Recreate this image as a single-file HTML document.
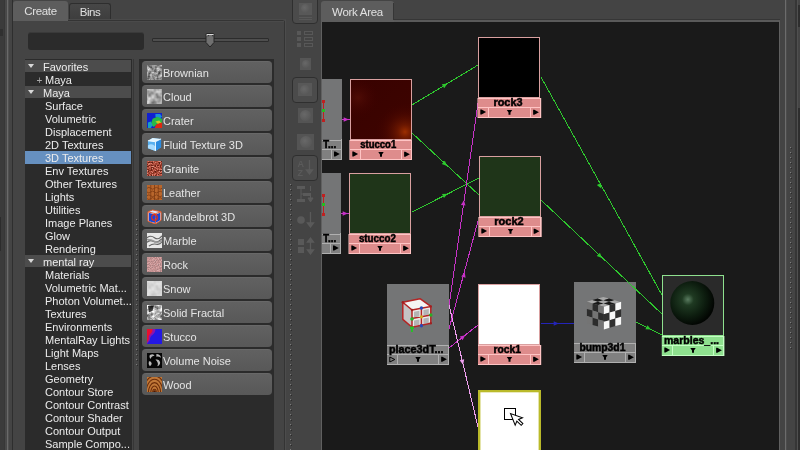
<!DOCTYPE html><html><head><meta charset="utf-8"><title>Hypershade</title><style>
html,body{margin:0;padding:0;background:#444;}
#root{will-change:transform;position:relative;width:800px;height:450px;overflow:hidden;background:#444;font-family:"Liberation Sans",sans-serif;font-size:11px;color:#ececec;}
#root div,#root span{position:absolute;box-sizing:border-box;white-space:nowrap;}
.tab{background:#5d5d5d;border-radius:3px 3px 0 0;color:#e0e0e0;text-align:center;}
#tree{left:25px;top:59px;width:107px;height:391px;background:#2b2b2b;}
#tree .row{left:0;width:107px;height:13px;line-height:13px;}
#tree .row{margin-top:-59px;}
#tree .hd{background:#4c4c4c;width:106px;height:12px;}
#tree .sel{background:#6690c0;width:106px;}
#tree .it{left:20px;top:1px;}
#tree .ht{left:18px;top:1px;}
#tree .pt{left:20px;top:1px;}
#tree .pl{left:11.5px;top:1px;color:#aaa;font-size:10px;}
#tree .tri{left:2.5px;top:4px;width:0;height:0;border-left:3.5px solid transparent;border-right:3.5px solid transparent;border-top:4.5px solid #d8d8d8;}
#list{left:139px;top:59px;width:135px;height:391px;background:#2b2b2b;}
#list .btn{left:3px;width:130px;height:22px;margin-top:-59px;background:linear-gradient(#616161,#585858);border-radius:4px;border-top:1px solid #686868;}
#list .ic{left:4.5px;top:2.5px;width:15px;height:15px;}
#list .bt{left:21px;top:1px;height:20px;line-height:21px;font-size:11px;color:#e4e4e4;}
.nl{font-family:"Liberation Sans",sans-serif;font-weight:bold;font-size:10px;fill:#000;stroke:#000;stroke-width:0.45px;}

</style></head><body>
<div id="root">
<div style="left:0;top:0;width:5px;height:450px;background:#3b3b3b"></div>
<div style="left:4px;top:0;width:1px;height:450px;background:#373737"></div>
<div style="left:5px;top:0;width:2px;height:450px;background:#484848"></div>
<div style="left:7px;top:0;width:1px;height:450px;background:#6a6a6a"></div>
<div style="left:8px;top:0;width:1px;height:450px;background:#505050"></div>
<div style="left:12px;top:0;width:1px;height:450px;background:#2e2e2e"></div>
<div style="left:0;top:217px;width:1px;height:34px;background:#2c2c2c"></div>
<div style="left:0;top:29px;width:3px;height:7px;background:#303030"></div>
<div class="tab" style="left:13px;top:1px;width:55px;height:20px;line-height:21px;font-size:11.5px;letter-spacing:-0.3px">Create</div>
<div class="tab" style="left:69px;top:3px;width:42px;height:17px;line-height:17px;font-size:11.5px;background:linear-gradient(#474747,#3d3d3d);border:1px solid #2e2e2e;border-bottom:none;border-radius:3px 3px 0 0;letter-spacing:-0.5px">Bins</div>
<div style="left:28px;top:32px;width:116px;height:18px;background:#2b2b2b;border-radius:3px;border-top:1px solid #3a3a3a"></div>
<div style="left:152px;top:38px;width:117px;height:4px;background:#4e4e4e;border:1px solid #2c2c2c;border-radius:1px"></div>
<svg style="position:absolute;left:203px;top:32px" width="15" height="17" viewBox="0 0 15 17"><path d="M3,2.500q0,-1 1,-1h6q1,0 1,1v8l-4,4.500l-4,-4.500z" fill="#707070" stroke="#262626" stroke-width="1"/><path d="M4,3.500v-1h6.500" fill="none" stroke="#dcdcdc" stroke-width="1"/><path d="M5,4.500v-1h1M9,3.500h1v1" fill="none" stroke="#3a3a3a" stroke-width="1"/></svg>

<div id="tree">
<div class="row hd" style="top:60px"><span class="tri"></span><span class="ht">Favorites</span></div>
<div class="row" style="top:73px"><span class="pl">+</span><span class="pt">Maya</span></div>
<div class="row hd" style="top:86px"><span class="tri"></span><span class="ht">Maya</span></div>
<div class="row" style="top:99px"><span class="it">Surface</span></div>
<div class="row" style="top:112px"><span class="it">Volumetric</span></div>
<div class="row" style="top:125px"><span class="it">Displacement</span></div>
<div class="row" style="top:138px"><span class="it">2D Textures</span></div>
<div class="row sel" style="top:151px"><span class="it">3D Textures</span></div>
<div class="row" style="top:164px"><span class="it">Env Textures</span></div>
<div class="row" style="top:177px"><span class="it">Other Textures</span></div>
<div class="row" style="top:190px"><span class="it">Lights</span></div>
<div class="row" style="top:203px"><span class="it">Utilities</span></div>
<div class="row" style="top:216px"><span class="it">Image Planes</span></div>
<div class="row" style="top:229px"><span class="it">Glow</span></div>
<div class="row" style="top:242px"><span class="it">Rendering</span></div>
<div class="row hd" style="top:255px"><span class="tri"></span><span class="ht">mental ray</span></div>
<div class="row" style="top:268px"><span class="it">Materials</span></div>
<div class="row" style="top:281px"><span class="it">Volumetric Mat...</span></div>
<div class="row" style="top:294px"><span class="it">Photon Volumet...</span></div>
<div class="row" style="top:307px"><span class="it">Textures</span></div>
<div class="row" style="top:320px"><span class="it">Environments</span></div>
<div class="row" style="top:333px"><span class="it">MentalRay Lights</span></div>
<div class="row" style="top:346px"><span class="it">Light Maps</span></div>
<div class="row" style="top:359px"><span class="it">Lenses</span></div>
<div class="row" style="top:372px"><span class="it">Geometry</span></div>
<div class="row" style="top:385px"><span class="it">Contour Store</span></div>
<div class="row" style="top:398px"><span class="it">Contour Contrast</span></div>
<div class="row" style="top:411px"><span class="it">Contour Shader</span></div>
<div class="row" style="top:424px"><span class="it">Contour Output</span></div>
<div class="row" style="top:437px"><span class="it">Sample Compo...</span></div>
</div>
<div id="list">
<div class="btn" style="top:61px"><span class="ic"><svg width="15" height="15" viewBox="0 0 16 16" style="position:absolute;left:0;top:0"><rect width="16" height="16" fill="#8c8c8c"/><rect width="16" height="16" filter="url(#nzB)" opacity="1"/></svg></span><span class="bt">Brownian</span></div>
<div class="btn" style="top:85px"><span class="ic"><svg width="15" height="15" viewBox="0 0 16 16" style="position:absolute;left:0;top:0"><rect width="16" height="16" fill="#a4a4a4"/><rect width="16" height="16" filter="url(#nzC)" opacity="0.9"/></svg></span><span class="bt">Cloud</span></div>
<div class="btn" style="top:109px"><span class="ic"><svg width="15" height="15" viewBox="0 0 16 16" style="position:absolute;left:0;top:0"><rect width="16" height="16" fill="#1020d0"/><path d="M9,1l5,0l2,3l-3,2l-4,-2z" fill="#1890d8"/><path d="M6,6l5,-2l5,2v5l-5,1l-4,3l-3,-3z" fill="#28b848"/><path d="M1,10l3,-1l2,4l-2,3h-3z" fill="#18a0c0"/><path d="M9,9l4,-1l2,2l-3,2z" fill="#c8c820"/><path d="M10,12l6,-2v6h-8z" fill="#e02810"/></svg></span><span class="bt">Crater</span></div>
<div class="btn" style="top:133px"><span class="ic"><svg width="15" height="15" viewBox="0 0 16 16" style="position:absolute;left:0;top:0"><path d="M1,4l5,-3l9,1l0,9l-6,4l-8,-3z" fill="#58b0f0"/><path d="M1,4l5,-3l9,1l-6,3z" fill="#e4f6ff"/><path d="M9,5l6,-3v9l-6,4z" fill="#2c8ce0"/><path d="M1,9q4,-3 8,1l0,5l-8,-3z" fill="#a8dcff"/><path d="M1,4l8,1l6,-3M9,5v10" stroke="#f4fbff" stroke-width="1" fill="none"/></svg></span><span class="bt">Fluid Texture 3D</span></div>
<div class="btn" style="top:157px"><span class="ic"><svg width="15" height="15" viewBox="0 0 16 16" style="position:absolute;left:0;top:0"><rect width="16" height="16" fill="#b04a34"/><rect width="16" height="16" filter="url(#nzG)" opacity="0.55"/></svg></span><span class="bt">Granite</span></div>
<div class="btn" style="top:181px"><span class="ic"><svg width="15" height="15" viewBox="0 0 16 16" style="position:absolute;left:0;top:0"><rect width="16" height="16" fill="#b8662c"/><path d="M0,3.500q2,-2 4,0t4,0t4,0t4,0M0,7.500q2,2 4,0t4,0t4,0t4,0M0,11.500q2,-2 4,0t4,0t4,0t4,0M0,14.500q2,2 4,0t4,0t4,0t4,0M4,0v16M8,0v16M12,0v16" stroke="#7a3810" stroke-width="1" fill="none" opacity="0.8"/></svg></span><span class="bt">Leather</span></div>
<div class="btn" style="top:205px"><span class="ic"><svg width="15" height="15" viewBox="0 0 16 16" style="position:absolute;left:0;top:0"><path d="M1,3l5,-2l9,2v9l-6,4l-8,-3z" fill="#d8e4f8"/><path d="M2,4l7,2l5,-2v8l-5,3l-7,-2z" fill="#1848d8"/><path d="M1,3l8,2l6,-2M9,5v11M1,3v10l8,3l6,-4v-9l-9,-2z" stroke="#e85828" stroke-width="1" fill="none"/><circle cx="8" cy="9" r="3" fill="none" stroke="#e03018" stroke-width="1.3"/><circle cx="7.500" cy="8.500" r="1.600" fill="#2040e0"/></svg></span><span class="bt">Mandelbrot 3D</span></div>
<div class="btn" style="top:229px"><span class="ic"><svg width="15" height="15" viewBox="0 0 16 16" style="position:absolute;left:0;top:0"><rect width="16" height="16" fill="#e8e8e8"/><path d="M0,5q4,-3 8,0t8,-2M0,10q3,-3 7,-1t9,-3M2,14q4,-3 8,-2t6,-3" stroke="#444" stroke-width="1.200" fill="none" opacity="0.8"/><path d="M0,7q5,0 8,2t8,-1" stroke="#9a9a9a" stroke-width="1.500" fill="none"/></svg></span><span class="bt">Marble</span></div>
<div class="btn" style="top:253px"><span class="ic"><svg width="15" height="15" viewBox="0 0 16 16" style="position:absolute;left:0;top:0"><rect width="16" height="16" fill="#cfa0a0"/><rect width="16" height="16" filter="url(#nzR)" opacity="0.18"/></svg></span><span class="bt">Rock</span></div>
<div class="btn" style="top:277px"><span class="ic"><svg width="15" height="15" viewBox="0 0 16 16" style="position:absolute;left:0;top:0"><rect width="16" height="16" fill="#e6e6e6"/><rect width="16" height="16" filter="url(#nzC)" opacity="0.25"/></svg></span><span class="bt">Snow</span></div>
<div class="btn" style="top:301px"><span class="ic"><svg width="15" height="15" viewBox="0 0 16 16" style="position:absolute;left:0;top:0"><rect width="16" height="16" fill="#9a9a9a"/><rect width="16" height="16" filter="url(#nzF)" opacity="1"/><path d="M1,1h6l-1,5l-4,2z" fill="#000" opacity="0.75" filter="url(#blur1)"/></svg></span><span class="bt">Solid Fractal</span></div>
<div class="btn" style="top:325px"><span class="ic"><svg width="15" height="15" viewBox="0 0 16 16" style="position:absolute;left:0;top:0"><rect width="16" height="16" fill="#2418e4"/><path d="M0,0h9q0,4 -3,6q-3,2 -3,6l-3,4z" fill="#8a14b0"/><path d="M0,0h6q0,3 -2,5q-3,2 -2,6l-2,3z" fill="#e81030"/></svg></span><span class="bt">Stucco</span></div>
<div class="btn" style="top:349px"><span class="ic"><svg width="15" height="15" viewBox="0 0 16 16" style="position:absolute;left:0;top:0"><rect width="16" height="16" fill="#060606"/><path d="M3,2q4,-2 5,1q-3,0 -4,3q-2,-1 -1,-4zM10,1q4,0 5,4q-3,-2 -5,-1zM9,7q4,-1 5,3q0,3 -3,4q2,-3 -2,-7zM2,9q2,-1 3,2q0,2 -2,3q-2,-2 -1,-5z" fill="#b8b8b8" filter="url(#blur1)"/></svg></span><span class="bt">Volume Noise</span></div>
<div class="btn" style="top:373px"><span class="ic"><svg width="15" height="15" viewBox="0 0 16 16" style="position:absolute;left:0;top:0"><rect width="16" height="16" fill="#c07838"/><g fill="none" stroke="#6c2c08" stroke-width="1.100"><ellipse cx="8" cy="17" rx="2" ry="4"/><ellipse cx="8" cy="17" rx="4" ry="7.500"/><ellipse cx="8" cy="17" rx="6.500" ry="11"/><ellipse cx="8" cy="17" rx="9" ry="14.500"/><ellipse cx="8" cy="17" rx="12" ry="18"/></g><ellipse cx="8" cy="17" rx="1.500" ry="3" fill="#4a1804"/></svg></span><span class="bt">Wood</span></div>
</div>
<div style="left:68px;top:20px;width:216px;height:1px;background:#343434;"></div>
<div style="left:284px;top:21px;width:1px;height:430px;background:#343434;"></div>
<div style="left:283px;top:20px;width:1px;height:1px;background:#3c3c3c;"></div>
<div style="left:68px;top:19px;width:218px;height:1px;background:#4a4a4a;"></div>
<div style="left:285px;top:20px;width:1px;height:431px;background:#4c4c4c;"></div>
<div style="left:68px;top:21px;width:216px;height:1px;background:#4a4a4a;"></div>
<div style="left:133px;top:59px;width:1px;height:391px;background:#363636;"></div>
<div style="left:136px;top:219px;width:1px;height:149px;background:repeating-linear-gradient(to bottom,#7c7c7c 0,#7c7c7c 1px,transparent 1px,transparent 5px)"></div>
<div style="left:137px;top:220px;width:1px;height:149px;background:repeating-linear-gradient(to bottom,#2c2c2c 0,#2c2c2c 1px,transparent 1px,transparent 5px)"></div>
<div style="left:290px;top:184px;width:1px;height:266px;background:repeating-linear-gradient(to bottom,#7c7c7c 0,#7c7c7c 1px,transparent 1px,transparent 5px)"></div>
<div style="left:291px;top:185px;width:1px;height:266px;background:repeating-linear-gradient(to bottom,#2c2c2c 0,#2c2c2c 1px,transparent 1px,transparent 5px)"></div>
<div style="left:790px;top:147px;width:1px;height:201px;background:repeating-linear-gradient(to bottom,#7c7c7c 0,#7c7c7c 1px,transparent 1px,transparent 5px)"></div>
<div style="left:791px;top:148px;width:1px;height:201px;background:repeating-linear-gradient(to bottom,#2c2c2c 0,#2c2c2c 1px,transparent 1px,transparent 5px)"></div>
<div style="left:292px;top:-4px;width:26px;height:28px;background:#4b4b4b;border:1px solid #2f2f2f;border-radius:4px"></div>
<div style="left:292px;top:77px;width:26px;height:26px;background:#4b4b4b;border:1px solid #2f2f2f;border-radius:4px"></div>
<div style="left:292px;top:155px;width:26px;height:26px;background:#4b4b4b;border:1px solid #2f2f2f;border-radius:4px"></div>
<div style="left:299px;top:3px;width:13px;height:12px;background:#585858;"></div>
<div style="left:299px;top:17px;width:13px;height:1px;background:#585858;"></div>
<div style="left:299px;top:19px;width:13px;height:1px;background:#585858;"></div>
<div style="left:297px;top:31px;width:4px;height:4px;background:#585858;"></div>
<div style="left:304px;top:31px;width:9px;height:4px;border:1px solid #585858"></div>
<div style="left:297px;top:37px;width:4px;height:4px;background:#585858;"></div>
<div style="left:304px;top:37px;width:9px;height:4px;border:1px solid #585858"></div>
<div style="left:297px;top:43px;width:4px;height:4px;background:#585858;"></div>
<div style="left:304px;top:43px;width:9px;height:4px;border:1px solid #585858"></div>
<div style="left:300px;top:58px;width:11px;height:12px;background:#565656;"></div>
<div style="left:298px;top:83px;width:14px;height:13px;background:#585858;"></div>
<div style="left:298px;top:108px;width:15px;height:15px;background:#545454;"></div>
<div style="left:297px;top:134px;width:17px;height:16px;background:#545454;"></div>
<svg style="position:absolute;left:292px;top:155px" width="26" height="105" viewBox="0 0 26 105" fill="none" stroke="#5a5a5a" stroke-width="1.3">
<text x="5.500" y="12" font-family="Liberation Sans,sans-serif" font-size="9" font-weight="bold" fill="#5a5a5a" stroke="none">A</text>
<text x="5.500" y="21" font-family="Liberation Sans,sans-serif" font-size="9" font-weight="bold" fill="#5a5a5a" stroke="none">Z</text>
<path d="M17.500,5v13M14.500,15l3,4l3,-4z" fill="#5a5a5a"/>
<rect x="5" y="31" width="8" height="3" fill="#5a5a5a" stroke="none"/><rect x="11" y="38" width="8" height="3" fill="#5a5a5a" stroke="none"/><rect x="5" y="44" width="8" height="3" fill="#5a5a5a" stroke="none"/>
<path d="M9,34v5h2M9,39v6" stroke-width="1"/>
<path d="M18.500,31v5M18.500,41v4M16,43l2.500,4l2.500,-4z" fill="#5a5a5a" stroke-width="1"/>
<circle cx="9" cy="65" r="3.800" fill="#595959" stroke="none"/>
<path d="M18.500,57v13M15.500,68l3,4l3,-4z" fill="#5a5a5a"/>
<rect x="6" y="84" width="6" height="6" fill="#595959" stroke="none"/><rect x="6" y="92" width="6" height="6" fill="#595959" stroke="none"/>
<path d="M18.500,86v11M15.500,87l3,-4l3,4zM15.500,95l3,4l3,-4z" fill="#5a5a5a"/>
</svg>
<div style="left:301.0px;top:4.0px;width:9.0px;height:9.0px;border-radius:50%;background:radial-gradient(circle at 40% 40%,#686868,#585858 70%)"></div>
<div style="left:301.5px;top:60px;width:8px;height:8px;border-radius:50%;background:radial-gradient(circle at 40% 40%,#686868,#585858 70%)"></div>
<div style="left:300px;top:84.5px;width:10px;height:10px;border-radius:50%;background:radial-gradient(circle at 40% 40%,#686868,#585858 70%)"></div>
<div style="left:300.0px;top:110.0px;width:11.0px;height:11.0px;border-radius:50%;background:radial-gradient(circle at 40% 40%,#686868,#585858 70%)"></div>
<div style="left:299.5px;top:136px;width:12px;height:12px;border-radius:50%;background:radial-gradient(circle at 40% 40%,#686868,#585858 70%)"></div>
<div class="tab" style="left:321px;top:1px;width:73px;height:21px;line-height:23px;font-size:11.5px;letter-spacing:-0.3px;border-radius:3px 3px 0 0">Work Area</div>
<div style="left:394px;top:19px;width:386px;height:1px;background:#363636;"></div>
<div style="left:394px;top:20px;width:386px;height:2px;background:#5a5a5a;"></div>
<div style="left:393px;top:3px;width:1px;height:17px;background:#363636;"></div>
<div style="left:321px;top:22px;width:1px;height:428px;background:#606060;"></div>
<div style="left:779px;top:21px;width:1px;height:429px;background:#606060;"></div>
<div style="left:785px;top:0px;width:1px;height:450px;background:#6c6c6c;"></div>
<div style="left:786px;top:0px;width:1px;height:450px;background:#4c4c4c;"></div>
<div style="left:795px;top:0px;width:2px;height:450px;background:#363636;"></div>
<div style="left:797px;top:0px;width:1px;height:450px;background:#505050;"></div>
<div style="left:798px;top:5px;width:2px;height:22px;background:#2e2e2e;"></div>
<div style="left:798px;top:108px;width:2px;height:342px;background:#2e2e2e;"></div>
<svg id="wa" width="800" height="450" viewBox="0 0 800 450" style="position:absolute;left:0;top:0">
<defs>
<radialGradient id="stg" cx="0.9" cy="0.88" r="0.5"><stop offset="0" stop-color="#a83400" stop-opacity="0.9"/><stop offset="0.25" stop-color="#802000" stop-opacity="0.65"/><stop offset="0.6" stop-color="#601000" stop-opacity="0.3"/><stop offset="1" stop-color="#400000" stop-opacity="0"/></radialGradient><radialGradient id="stg2" cx="0.12" cy="0.3" r="0.35"><stop offset="0" stop-color="#581008" stop-opacity="0.7"/><stop offset="1" stop-color="#400000" stop-opacity="0"/></radialGradient>
<linearGradient id="stucco" x1="0" y1="0" x2="1" y2="1"><stop offset="0" stop-color="#380200"/><stop offset="1" stop-color="#3e0400"/></linearGradient>
<radialGradient id="sph" cx="0.4" cy="0.42" r="0.6"><stop offset="0" stop-color="#5a7c60"/><stop offset="0.22" stop-color="#1f3a22"/><stop offset="0.65" stop-color="#0d1d0f"/><stop offset="1" stop-color="#020502"/></radialGradient>
<filter id="nzB" x="0" y="0" width="1" height="1" color-interpolation-filters="sRGB"><feTurbulence type="fractalNoise" baseFrequency="0.28" numOctaves="3" seed="3"/><feColorMatrix type="matrix" values="1 0 0 0 0.04 1 0 0 0 0.04 1 0 0 0 0.04 0 0 0 0 1"/></filter>
<filter id="nzC" x="0" y="0" width="1" height="1" color-interpolation-filters="sRGB"><feTurbulence type="fractalNoise" baseFrequency="0.16" numOctaves="2" seed="7"/><feColorMatrix type="matrix" values="0.9 0 0 0 0.2 0.9 0 0 0 0.2 0.9 0 0 0 0.2 0 0 0 0 1"/></filter>
<filter id="nzG" x="0" y="0" width="1" height="1" color-interpolation-filters="sRGB"><feTurbulence type="fractalNoise" baseFrequency="0.7" numOctaves="2" seed="5"/><feColorMatrix type="matrix" values="2.5 0 0 0 -0.6 2 0 0 0 -0.7 2 0 0 0 -0.75 0 0 0 0 1"/></filter>
<filter id="nzR" x="0" y="0" width="1" height="1" color-interpolation-filters="sRGB"><feTurbulence type="fractalNoise" baseFrequency="0.9" numOctaves="1" seed="9"/><feColorMatrix type="matrix" values="3 0 0 0 -0.9 2.5 0 0 0 -0.9 2.5 0 0 0 -0.9 0 0 0 0 1"/></filter>
<filter id="nzF" x="0" y="0" width="1" height="1" color-interpolation-filters="sRGB"><feTurbulence type="fractalNoise" baseFrequency="0.22" numOctaves="4" seed="11"/><feColorMatrix type="matrix" values="1.3 0 0 0 0.05 1.3 0 0 0 0.05 1.3 0 0 0 0.05 0 0 0 0 1"/></filter>
<filter id="blur1" x="-0.2" y="-0.2" width="1.4" height="1.4"><feGaussianBlur stdDeviation="0.7"/></filter>
</defs>

<rect x="322" y="22" width="457" height="428" fill="#1a1a1a"/>
<g shape-rendering="crispEdges">
<rect x="322" y="79" width="20" height="61" fill="#747576"/><rect x="322" y="140" width="20" height="20" fill="#808080"/>
<rect x="322" y="140" width="20" height="1" fill="#b0b0b0"/>
<rect x="322" y="149" width="20" height="1" fill="#b0b0b0"/>
<rect x="341" y="139" width="1" height="21" fill="#b0b0b0"/>
<rect x="331" y="150" width="1" height="10" fill="#b0b0b0"/>
<rect x="322" y="159" width="20" height="1" fill="#b0b0b0"/>
<rect x="323" y="101" width="1" height="20" fill="#c02020"/>
<rect x="322" y="100" width="3" height="3" fill="#c02020"/>
<rect x="322" y="119" width="3" height="3" fill="#c02020"/>
<rect x="322" y="109" width="3" height="3" fill="#20c020"/>
</g>
<text x="323" y="148.4" class="nl">T...</text>
<path d="M334,151.5h1.2l4.6,2.5l-4.6,2.5h-1.2z" fill="#000"/>
<g shape-rendering="crispEdges">
<rect x="322" y="173" width="19" height="61" fill="#747576"/><rect x="322" y="234" width="19" height="20" fill="#808080"/>
<rect x="322" y="234" width="19" height="1" fill="#b0b0b0"/>
<rect x="322" y="243" width="19" height="1" fill="#b0b0b0"/>
<rect x="340" y="233" width="1" height="21" fill="#b0b0b0"/>
<rect x="330" y="244" width="1" height="10" fill="#b0b0b0"/>
<rect x="322" y="253" width="19" height="1" fill="#b0b0b0"/>
<rect x="323" y="195" width="1" height="20" fill="#c02020"/>
<rect x="322" y="194" width="3" height="3" fill="#c02020"/>
<rect x="322" y="213" width="3" height="3" fill="#c02020"/>
<rect x="322" y="203" width="3" height="3" fill="#20c020"/>
</g>
<text x="323" y="242.4" class="nl">T...</text>
<path d="M333,245.5h1.2l4.6,2.5l-4.6,2.5h-1.2z" fill="#000"/>
<line x1="342" y1="119.5" x2="350" y2="119.5" stroke="#c832c8" stroke-width="1" shape-rendering="crispEdges"/><path d="M348.8,119.5L343.7,121.8L343.7,117.2z" fill="#c832c8"/>
<line x1="341" y1="213.5" x2="349" y2="213.5" stroke="#c832c8" stroke-width="1" shape-rendering="crispEdges"/><path d="M347.8,213.5L342.7,215.8L342.7,211.2z" fill="#c832c8"/>
<line x1="412" y1="105" x2="478" y2="65" stroke="#2ec82e" stroke-width="1" shape-rendering="crispEdges"/><path d="M447.4,83.6L444.2,88.2L441.8,84.2z" fill="#2ec82e"/>
<line x1="412" y1="133" x2="479" y2="195" stroke="#2ec82e" stroke-width="1" shape-rendering="crispEdges"/><path d="M447.0,165.9L441.7,164.1L444.9,160.7z" fill="#2ec82e"/>
<line x1="412" y1="212" x2="479" y2="178" stroke="#2ec82e" stroke-width="1" shape-rendering="crispEdges"/><path d="M447.5,193.8L444.0,198.1L441.9,194.0z" fill="#2ec82e"/>
<line x1="541" y1="77" x2="662" y2="295" stroke="#2ec82e" stroke-width="1" shape-rendering="crispEdges"/><path d="M601.3,188.4L596.9,185.1L600.9,182.9z" fill="#2ec82e"/>
<line x1="636" y1="322" x2="662" y2="335" stroke="#2ec82e" stroke-width="1" shape-rendering="crispEdges"/><path d="M651.0,329.5L645.4,329.3L647.5,325.2z" fill="#2ec82e"/>
<line x1="541" y1="323.5" x2="574" y2="323.5" stroke="#2424b8" stroke-width="1" shape-rendering="crispEdges"/><path d="M558.8,323.5L553.7,325.8L553.7,321.2z" fill="#2424b8"/>
<line x1="449" y1="306" x2="478" y2="103" stroke="#c832c8" stroke-width="1" shape-rendering="crispEdges"/><path d="M463.9,200.3L465.5,205.6L460.9,205.0z" fill="#c832c8"/>
<line x1="449" y1="329" x2="478" y2="221" stroke="#c832c8" stroke-width="1" shape-rendering="crispEdges"/><path d="M464.7,272.3L465.6,277.8L461.2,276.6z" fill="#c832c8"/>
<line x1="449" y1="348" x2="478" y2="325" stroke="#c832c8" stroke-width="1" shape-rendering="crispEdges"/><path d="M465.2,335.3L462.6,340.2L459.8,336.6z" fill="#c832c8"/>
<line x1="449" y1="305" x2="478" y2="427" stroke="#f0a0f0" stroke-width="1" shape-rendering="crispEdges"/><path d="M463.1,364.7L459.7,360.3L464.2,359.2z" fill="#f0a0f0"/>
<g shape-rendering="crispEdges">
<rect x="350" y="79" width="62" height="61" fill="#d9a0a0"/>
<rect x="351" y="80" width="60" height="59" fill="url(#stucco)"/><rect x="351" y="80" width="60" height="59" fill="url(#stg2)"/><rect x="351" y="80" width="60" height="59" fill="url(#stg)"/>
</g>
<rect x="349.4" y="140" width="62.6" height="20" fill="#ffc4c4"/>
<g shape-rendering="crispEdges">
<rect x="350" y="141" width="61" height="8" fill="#de8c8c"/>
<rect x="350" y="150" width="10" height="9" fill="#de8c8c"/>
<rect x="361" y="150" width="40" height="9" fill="#de8c8c"/>
<rect x="402" y="150" width="9" height="9" fill="#de8c8c"/>
</g>
<text x="378.2" y="148.4" text-anchor="middle" class="nl" textLength="36" lengthAdjust="spacingAndGlyphs">stucco1</text>
<path d="M352.3,151.5h1.2l4.6,2.5l-4.6,2.5h-1.2z" fill="#000"/>
<path d="M378.3,152h5.4l-1.7,2.6v2.2h-2v-2.2z" fill="#000"/>
<path d="M404.1,151.7h1.2l4.6,2.5l-4.6,2.5h-1.2z" fill="#000"/>
<g shape-rendering="crispEdges">
<rect x="349" y="173" width="62" height="61" fill="#d9a0a0"/>
<rect x="350" y="174" width="60" height="59" fill="#1f3519"/>
</g>
<rect x="348.5" y="234" width="62.5" height="20" fill="#ffc4c4"/>
<g shape-rendering="crispEdges">
<rect x="349" y="235" width="61" height="8" fill="#de8c8c"/>
<rect x="349" y="244" width="10" height="9" fill="#de8c8c"/>
<rect x="360" y="244" width="40" height="9" fill="#de8c8c"/>
<rect x="401" y="244" width="9" height="9" fill="#de8c8c"/>
</g>
<text x="377.4" y="242.4" text-anchor="middle" class="nl" textLength="37" lengthAdjust="spacingAndGlyphs">stucco2</text>
<path d="M351.3,245.5h1.2l4.6,2.5l-4.6,2.5h-1.2z" fill="#000"/>
<path d="M377.3,246h5.4l-1.7,2.6v2.2h-2v-2.2z" fill="#000"/>
<path d="M403.1,245.7h1.2l4.6,2.5l-4.6,2.5h-1.2z" fill="#000"/>
<g shape-rendering="crispEdges">
<rect x="478" y="37" width="62" height="61" fill="#d9a0a0"/>
<rect x="479" y="38" width="60" height="59" fill="#000"/>
</g>
<rect x="477.5" y="98" width="63.7" height="20" fill="#ffc4c4"/>
<g shape-rendering="crispEdges">
<rect x="478" y="99" width="62" height="8" fill="#de8c8c"/>
<rect x="478" y="108" width="10" height="9" fill="#de8c8c"/>
<rect x="489" y="108" width="41" height="9" fill="#de8c8c"/>
<rect x="531" y="108" width="9" height="9" fill="#de8c8c"/>
</g>
<text x="508" y="106.4" text-anchor="middle" class="nl" textLength="29" lengthAdjust="spacingAndGlyphs">rock3</text>
<path d="M480.3,109.5h1.2l4.6,2.5l-4.6,2.5h-1.2z" fill="#000"/>
<path d="M506.8,110h5.4l-1.7,2.6v2.2h-2v-2.2z" fill="#000"/>
<path d="M533.1,109.7h1.2l4.6,2.5l-4.6,2.5h-1.2z" fill="#000"/>
<g shape-rendering="crispEdges">
<rect x="479" y="156" width="62" height="61" fill="#d9a0a0"/>
<rect x="480" y="157" width="60" height="59" fill="#1f3519"/>
</g>
<rect x="478.4" y="217" width="63.3" height="20" fill="#ffc4c4"/>
<g shape-rendering="crispEdges">
<rect x="479" y="218" width="61" height="8" fill="#de8c8c"/>
<rect x="479" y="227" width="10" height="9" fill="#de8c8c"/>
<rect x="490" y="227" width="41" height="9" fill="#de8c8c"/>
<rect x="532" y="227" width="8" height="9" fill="#de8c8c"/>
</g>
<text x="509" y="225.4" text-anchor="middle" class="nl" textLength="29.5" lengthAdjust="spacingAndGlyphs">rock2</text>
<path d="M481.3,228.5h1.2l4.6,2.5l-4.6,2.5h-1.2z" fill="#000"/>
<path d="M507.8,229h5.4l-1.7,2.6v2.2h-2v-2.2z" fill="#000"/>
<path d="M533.6,228.7h1.2l4.6,2.5l-4.6,2.5h-1.2z" fill="#000"/>
<g shape-rendering="crispEdges">
<rect x="478" y="284" width="62" height="61" fill="#d9a0a0"/>
<rect x="479" y="285" width="60" height="59" fill="#fff"/>
</g>
<rect x="478" y="345" width="63.2" height="20" fill="#ffc4c4"/>
<g shape-rendering="crispEdges">
<rect x="478" y="346" width="62" height="8" fill="#de8c8c"/>
<rect x="478" y="355" width="10" height="9" fill="#de8c8c"/>
<rect x="489" y="355" width="41" height="9" fill="#de8c8c"/>
<rect x="531" y="355" width="9" height="9" fill="#de8c8c"/>
</g>
<text x="507.3" y="353.4" text-anchor="middle" class="nl" textLength="27.5" lengthAdjust="spacingAndGlyphs">rock1</text>
<path d="M480.3,356.5h1.2l4.6,2.5l-4.6,2.5h-1.2z" fill="#000"/>
<path d="M506.8,357h5.4l-1.7,2.6v2.2h-2v-2.2z" fill="#000"/>
<path d="M533.1,356.7h1.2l4.6,2.5l-4.6,2.5h-1.2z" fill="#000"/>
<g shape-rendering="crispEdges">
<rect x="387" y="284" width="62" height="61" fill="#747576"/>
<g shape-rendering="auto" stroke-linejoin="round">
<path d="M402.800,302.200L420,298.700L430.800,306.400L412,310z" fill="#f4f4f4"/>
<path d="M402.800,302.200L412,310L412,327.200L402.800,319.400z" fill="#c4c4c4"/>
<path d="M412,310L430.800,306.400L430.800,323.300L412,327.200z" fill="#ececec"/>
<path d="M414,311.800l5.400,-1v5.600l-5.400,1zM423.400,309.900l5.400,-1v5.600l-5.400,1zM414,320.500l5.400,-1v5.600l-5.400,1zM423.400,318.600l5.400,-1v5.400l-5.400,1z" fill="#b4b4b4"/>
<path d="M402.800,302.200L420,298.700L430.800,306.400L412,310zM402.800,302.200L402.800,319.400L412,327.200L412,310M412,327.200L430.800,323.300L430.800,306.400M421.400,308.200L421.400,325.300M412,318.600L430.800,314.900" fill="none" stroke="#b42424" stroke-width="1.500"/>
<circle cx="421.400" cy="308" r="1.700" fill="#2848b8"/><circle cx="421.400" cy="325.700" r="1.700" fill="#2848b8"/>
<circle cx="412" cy="319" r="1.800" fill="#28b028"/><circle cx="430.800" cy="315" r="1.800" fill="#28b028"/>
<circle cx="421.400" cy="316.800" r="1.600" fill="#d0b020"/>
<path d="M410,326.500h4v2.500h-1v3h-2v-3h-1z" fill="#28c028"/>
<circle cx="412" cy="310" r="1.200" fill="#a02020"/><circle cx="430.800" cy="306.400" r="1.200" fill="#a02020"/><circle cx="430.800" cy="323.300" r="1.200" fill="#a02020"/><circle cx="402.800" cy="302.200" r="1.200" fill="#a02020"/>
</g>

</g>
<rect x="387" y="345" width="62" height="20" fill="#b0b0b0"/>
<g shape-rendering="crispEdges">
<rect x="387" y="346" width="61" height="8" fill="#808080"/>
<rect x="387" y="355" width="10" height="9" fill="#808080"/>
<rect x="398" y="355" width="40" height="9" fill="#808080"/>
<rect x="439" y="355" width="9" height="9" fill="#808080"/>
</g>
<text x="389" y="353.4" text-anchor="start" class="nl" textLength="54.5" lengthAdjust="spacingAndGlyphs">place3dT...</text>
<path d="M389.8,357.0l5,2.5l-5,2.5z" fill="none" stroke="#000" stroke-width="1"/>
<path d="M415.3,357h5.4l-1.7,2.6v2.2h-2v-2.2z" fill="#000"/>
<path d="M441.1,356.7h1.2l4.6,2.5l-4.6,2.5h-1.2z" fill="#000"/>
<g shape-rendering="crispEdges">
<rect x="574" y="282" width="62" height="61" fill="#747576"/>
<g shape-rendering="auto"><path d="M586.9,301.7L592.4,300.1L598.0,301.8L592.6,303.4z" fill="#a8a8a8"/><path d="M592.6,303.4L598.0,301.8L603.7,303.4L598.2,305.0z" fill="#181818"/><path d="M598.2,305.0L603.7,303.4L609.4,305.1L603.9,306.7z" fill="#a8a8a8"/><path d="M592.4,300.1L597.8,298.5L603.5,300.2L598.0,301.8z" fill="#181818"/><path d="M598.0,301.8L603.5,300.2L609.2,301.8L603.7,303.4z" fill="#a8a8a8"/><path d="M603.7,303.4L609.2,301.8L614.8,303.5L609.4,305.1z" fill="#181818"/><path d="M597.8,298.5L603.3,296.9L609.0,298.6L603.5,300.2z" fill="#a8a8a8"/><path d="M603.5,300.2L609.0,298.6L614.6,300.2L609.2,301.8z" fill="#181818"/><path d="M609.2,301.8L614.6,300.2L620.3,301.9L614.8,303.5z" fill="#a8a8a8"/><path d="M586.9,301.7L592.6,303.4L592.6,310.6L586.9,308.9z" fill="#747474"/><path d="M586.9,308.9L592.6,310.6L592.6,317.8L586.9,316.1z" fill="#2c2c2c"/><path d="M586.9,316.1L592.6,317.8L592.6,325.0L586.9,323.3z" fill="#747474"/><path d="M592.6,303.4L598.2,305.0L598.2,312.2L592.6,310.6z" fill="#2c2c2c"/><path d="M592.6,310.6L598.2,312.2L598.2,319.4L592.6,317.8z" fill="#747474"/><path d="M592.6,317.8L598.2,319.4L598.2,326.6L592.6,325.0z" fill="#2c2c2c"/><path d="M598.2,305.0L603.9,306.7L603.9,313.9L598.2,312.2z" fill="#747474"/><path d="M598.2,312.2L603.9,313.9L603.9,321.1L598.2,319.4z" fill="#2c2c2c"/><path d="M598.2,319.4L603.9,321.1L603.9,328.3L598.2,326.6z" fill="#747474"/><path d="M603.9,306.7L609.6,305.0L609.6,312.6L603.9,314.3z" fill="#f8f8f8"/><path d="M603.9,314.3L609.6,312.6L609.6,320.2L603.9,321.8z" fill="#303030"/><path d="M603.9,321.8L609.6,320.2L609.6,327.7L603.9,329.4z" fill="#f8f8f8"/><path d="M609.6,305.0L615.4,303.4L615.4,310.9L609.6,312.6z" fill="#303030"/><path d="M609.6,312.6L615.4,310.9L615.4,318.5L609.6,320.2z" fill="#f8f8f8"/><path d="M609.6,320.2L615.4,318.5L615.4,326.1L609.6,327.7z" fill="#303030"/><path d="M615.4,303.4L621.1,301.7L621.1,309.3L615.4,310.9z" fill="#f8f8f8"/><path d="M615.4,310.9L621.1,309.3L621.1,316.8L615.4,318.5z" fill="#303030"/><path d="M615.4,318.5L621.1,316.8L621.1,324.4L615.4,326.1z" fill="#f8f8f8"/></g>
</g>
<rect x="574" y="343" width="62" height="20" fill="#b0b0b0"/>
<g shape-rendering="crispEdges">
<rect x="574" y="344" width="61" height="8" fill="#808080"/>
<rect x="574" y="353" width="10" height="9" fill="#808080"/>
<rect x="585" y="353" width="40" height="9" fill="#808080"/>
<rect x="626" y="353" width="9" height="9" fill="#808080"/>
</g>
<text x="602.4" y="351.4" text-anchor="middle" class="nl" textLength="46" lengthAdjust="spacingAndGlyphs">bump3d1</text>
<path d="M576.3,354.5h1.2l4.6,2.5l-4.6,2.5h-1.2z" fill="#000"/>
<path d="M602.3,355h5.4l-1.7,2.6v2.2h-2v-2.2z" fill="#000"/>
<path d="M628.1,354.7h1.2l4.6,2.5l-4.6,2.5h-1.2z" fill="#000"/>
<g shape-rendering="crispEdges">
<rect x="662" y="275" width="62" height="61" fill="#8ee08e"/>
<rect x="663" y="276" width="60" height="59" fill="#2a2a2a"/><circle cx="692.3" cy="303" r="22" fill="url(#sph)" shape-rendering="auto"/>

</g>
<rect x="661.8" y="336" width="62.6" height="20" fill="#c4ffc4"/>
<g shape-rendering="crispEdges">
<rect x="662" y="337" width="61" height="8" fill="#8ee08e"/>
<rect x="662" y="346" width="10" height="9" fill="#8ee08e"/>
<rect x="673" y="346" width="40" height="9" fill="#8ee08e"/>
<rect x="714" y="346" width="9" height="9" fill="#8ee08e"/>
</g>
<text x="664" y="344.4" text-anchor="start" class="nl" textLength="55" lengthAdjust="spacingAndGlyphs">marbles_...</text>
<path d="M664.3,347.5h1.2l4.6,2.5l-4.6,2.5h-1.2z" fill="#000"/>
<path d="M690.3,348h5.4l-1.7,2.6v2.2h-2v-2.2z" fill="#000"/>
<path d="M716.1,347.7h1.2l4.6,2.5l-4.6,2.5h-1.2z" fill="#000"/>
<line x1="541" y1="200" x2="662" y2="314" stroke="#2ec82e" stroke-width="1" shape-rendering="crispEdges"/><path d="M602.0,257.9L596.7,256.1L599.9,252.7z" fill="#2ec82e"/>
<g shape-rendering="crispEdges"><rect x="478" y="390" width="63" height="62" fill="#baba2a"/><rect x="480.4" y="392.3" width="58.2" height="60" fill="#fff" shape-rendering="auto"/>
<rect x="504.5" y="408.5" width="11" height="11" fill="#fff" stroke="#000" stroke-width="1"/></g>
<path d="M510.5,413.5l0,12.5l3,-3l2.5,5.5l2.2,-1l-2.5,-5.5l4.3,0z" transform="rotate(-22 510.5 413.5)" fill="#fff" stroke="#000" stroke-width="1"/>
</svg>
</div></body></html>
